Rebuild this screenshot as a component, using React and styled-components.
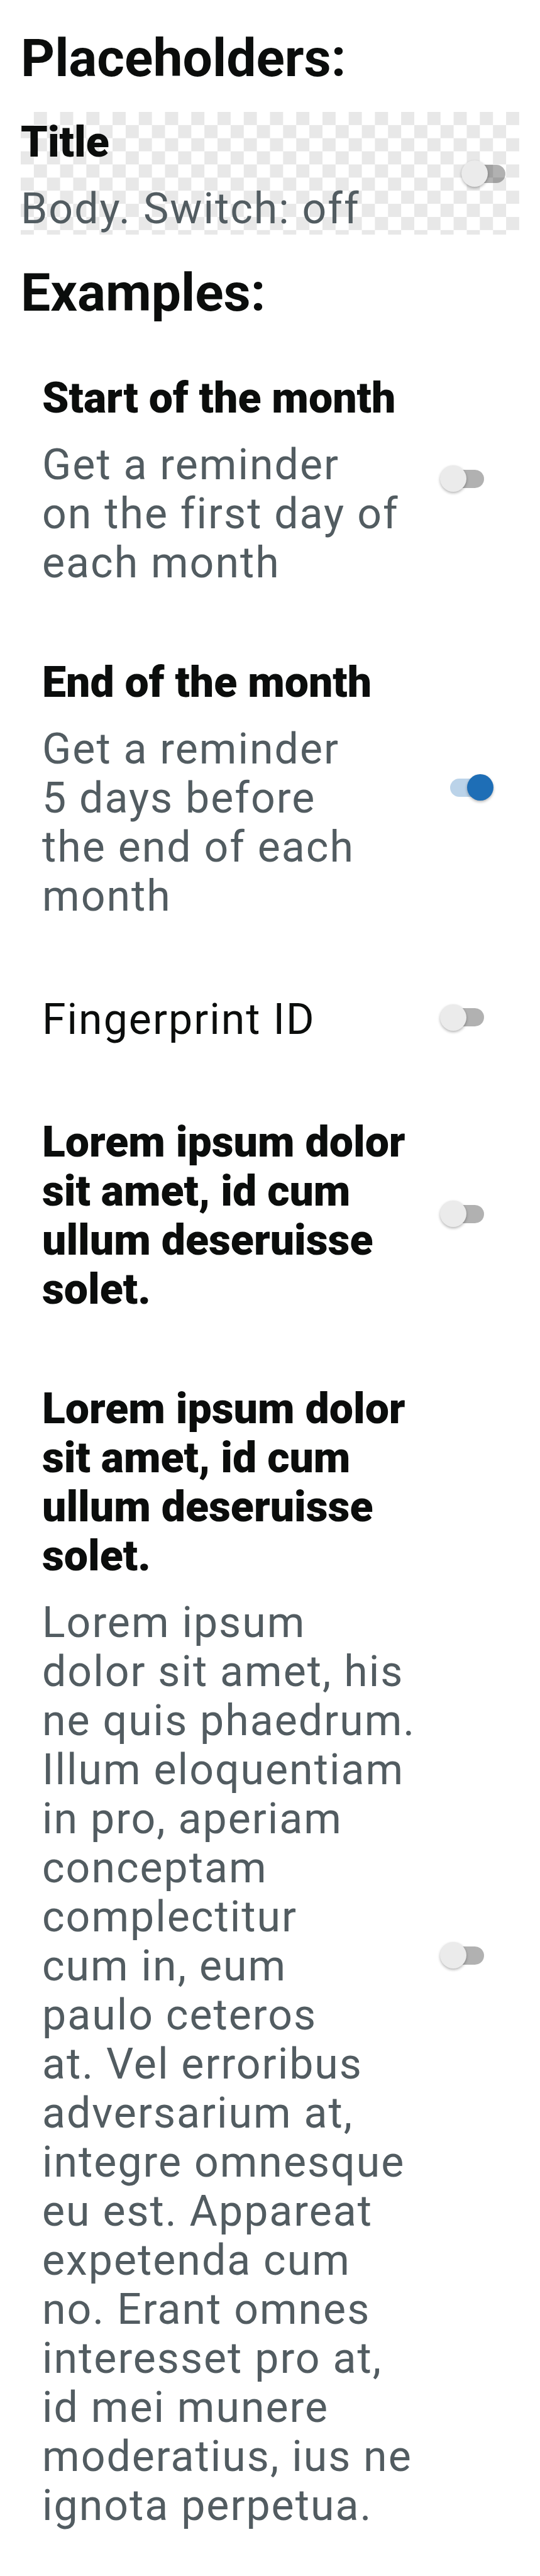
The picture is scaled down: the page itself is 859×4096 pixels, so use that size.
import React, { useId, useState } from "react";
import styled, { createGlobalStyle } from "styled-components";

const GlobalStyle = createGlobalStyle`
  *, *::before, *::after { box-sizing: border-box; }
  body {
    margin: 0;
    background: #fff;
    color: #0b0d0c;
    font-family: Roboto, "Liberation Sans", sans-serif;
  }
`;

const Page = styled.main`
  display: flex;
  flex-direction: column;
  padding: 0 33px 16px;
`;

const SectionHeading = styled.h2`
  margin: 44px 0 36px;
  font-size: 84px;
  line-height: 98px;
  font-weight: 700;
`;

const Placeholder = styled.div`
  padding: 9px 0 2px;
  background: repeating-conic-gradient(#e8e8e8 0 25%, #fff 0 50%) 0 0 /
    calc((100vw - 66px) / 19) calc((100vw - 66px) / 19);
`;

const Examples = styled.div`
  display: flex;
  flex-direction: column;
  padding: 0 34px;
  margin-top: -13px;
`;

const ExampleRow = styled.div`
  padding: 56px 0;
`;

const Row = styled.div`
  display: flex;
  align-items: center;
  gap: 20px;
  min-height: 89px;
`;

const Texts = styled.label`
  flex: 1;
  display: flex;
  flex-direction: column;
  gap: 28px;
  font-size: 68px;
  line-height: 78px;
  white-space: pre-line;
`;

const Title = styled.span`
  font-weight: ${(p) => (p.$plain ? 400 : 900)};
  letter-spacing: ${(p) => (p.$plain ? "2px" : "normal")};
`;

const Body = styled.span`
  color: #525c61;
  letter-spacing: 2px;
`;

const Switch = styled.input.attrs({ type: "checkbox", role: "switch" })`
  appearance: none;
  flex: none;
  display: grid;
  align-items: center;
  width: 85px;
  height: 42px;
  margin: 0 7px 6px 0;
  cursor: pointer;

  &::before,
  &::after {
    content: "";
    grid-area: 1 / 1;
  }
  &::before {
    justify-self: center;
    width: 54px;
    height: 29px;
    border-radius: 15px;
    background: rgba(0, 0, 0, 0.305);
  }
  &::after {
    justify-self: start;
    width: 42px;
    height: 42px;
    border-radius: 50%;
    background: #ebebeb;
    box-shadow: 0 2px 4px rgba(0, 0, 0, 0.3);
  }
  &:checked::before {
    background: rgba(30, 110, 182, 0.3);
  }
  &:checked::after {
    justify-self: end;
    background: #1e6eb6;
  }
`;

function SwitchRow({ title, body, plain, initial = false }) {
  const id = useId();
  const [on, setOn] = useState(initial);
  return (
    <Row>
      <Texts htmlFor={id}>
        <Title $plain={plain}>{title}</Title>
        {body && <Body>{body}</Body>}
      </Texts>
      <Switch id={id} checked={on} onChange={(e) => setOn(e.target.checked)} />
    </Row>
  );
}

const LOREM_TITLE = "Lorem ipsum dolor\nsit amet, id cum\nullum deseruisse\nsolet.";

const LOREM_BODY = [
  "Lorem ipsum",
  "dolor sit amet, his",
  "ne quis phaedrum.",
  "Illum eloquentiam",
  "in pro, aperiam",
  "conceptam",
  "complectitur",
  "cum in, eum",
  "paulo ceteros",
  "at. Vel erroribus",
  "adversarium at,",
  "integre omnesque",
  "eu est. Appareat",
  "expetenda cum",
  "no. Erant omnes",
  "interesset pro at,",
  "id mei munere",
  "moderatius, ius ne",
  "ignota perpetua.",
].join("\n");

const EXAMPLES = [
  {
    title: "Start of the month",
    body: "Get a reminder\non the first day of\neach month",
  },
  {
    title: "End of the month",
    body: "Get a reminder\n5 days before\nthe end of each\nmonth",
    initial: true,
  },
  { title: "Fingerprint ID", plain: true },
  { title: LOREM_TITLE },
  { title: LOREM_TITLE, body: LOREM_BODY },
];

export default function App() {
  return (
    <>
      <GlobalStyle />
      <Page>
        <SectionHeading>Placeholders:</SectionHeading>
        <Placeholder>
          <SwitchRow title="Title" body="Body. Switch: off" />
        </Placeholder>
        <SectionHeading>Examples:</SectionHeading>
        <Examples>
          {EXAMPLES.map((example, i) => (
            <ExampleRow key={i}>
              <SwitchRow {...example} />
            </ExampleRow>
          ))}
        </Examples>
      </Page>
    </>
  );
}
